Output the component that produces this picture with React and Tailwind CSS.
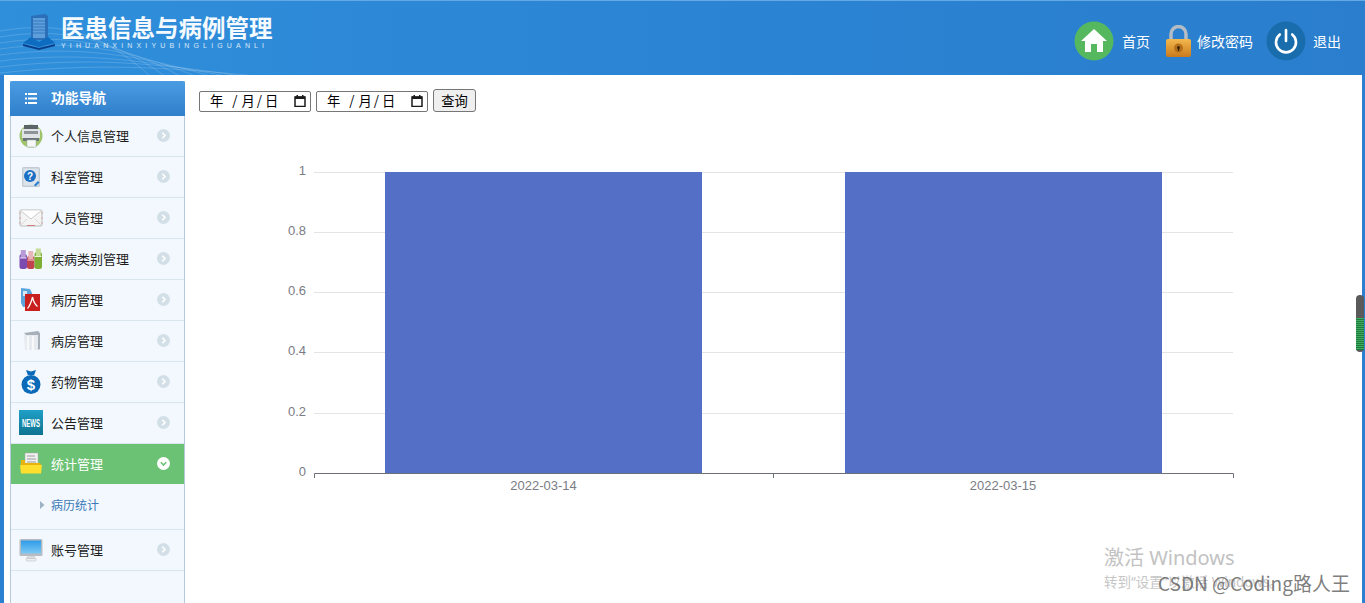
import React from "react";

const cjk = { fontFamily: '"Noto Sans CJK SC", "Noto Sans", sans-serif' };

function Printer() {
  return (
    <svg width="24" height="24" viewBox="0 0 24 24">
      <circle cx="12" cy="12" r="11.500" fill="#9fc46a" />
      <rect x="5" y="1" width="14" height="4" fill="#5c6468" />
      <rect x="3" y="5" width="18" height="9" fill="#dfe3e5" />
      <rect x="5" y="7" width="14" height="3" fill="#8d9599" />
      <rect x="4" y="14" width="16" height="3" fill="#6b7478" />
      <rect x="8" y="16" width="9" height="7" fill="#f7f7f7" stroke="#99aaaa" strokeWidth=".5" />
    </svg>
  );
}
function Help() {
  return (
    <svg width="24" height="24" viewBox="0 0 24 24">
      <rect x="3" y="2" width="18" height="20" rx="1.500" fill="#c3ccd6" />
      <rect x="4.500" y="3.500" width="15" height="17" fill="#dde3ea" />
      <circle cx="11" cy="11" r="6" fill="#1b6fc4" />
      <text x="11" y="14.500" fontSize="10" fontWeight="700" fill="#fff" textAnchor="middle" fontFamily="Liberation Sans">?</text>
      <path d="M15 20l4-4 1.500 1.500-4 4z" fill="#2a7fcf" />
    </svg>
  );
}
function Mail() {
  return (
    <svg width="24" height="24" viewBox="0 0 24 24">
      <rect x="1" y="4" width="22" height="16" rx="1" fill="#f4f4f4" stroke="#bdbdbd" />
      <path d="M1.500 4.500L12 13 22.500 4.500" fill="#fff" stroke="#cacaca" />
      <path d="M2 19l6-6M22 19l-6-6" stroke="#d8d8d8" />
      <path d="M1 6v13M23 6v13" stroke="#d49a9a" strokeWidth=".8" strokeDasharray="2 3" />
      <path d="M8 19.500h8" stroke="#cf8080" />
    </svg>
  );
}
function Tubes() {
  return (
    <svg width="24" height="24" viewBox="0 0 24 24">
      <rect x="0.500" y="7" width="7.500" height="15" rx="2.500" fill="#7c4bb0" />
      <rect x="1.800" y="3" width="5" height="8" fill="#b79bd6" />
      <path d="M1 11h6.500" stroke="#e6dcf2" />
      <rect x="8" y="9" width="7.500" height="13" rx="2.500" fill="#c0434f" />
      <rect x="9.300" y="4" width="5" height="8" fill="#e8b6ba" />
      <path d="M8.500 13h6.500" stroke="#f5dcde" />
      <rect x="15.500" y="5" width="7.500" height="17" rx="2.500" fill="#7fae34" />
      <rect x="16.800" y="1.500" width="5" height="8" fill="#c4dc97" />
      <path d="M16 9.500h6.500" stroke="#eaf4d8" />
    </svg>
  );
}
function Pdf() {
  return (
    <svg width="24" height="24" viewBox="0 0 24 24">
      <path d="M2 0l9 1 2 4v13l-9 1-2-4z" fill="#5ba4dc" />
      <rect x="4" y="3" width="4" height="5" fill="#d3e7f6" />
      <rect x="6" y="6" width="15" height="17" fill="#c91f1f" />
      <path d="M13.500 9c-1 4.500-3 9-5 11.500M13.500 9c1 4.500 3 8 5 9.500" stroke="#fff" strokeWidth="1.200" fill="none" />
    </svg>
  );
}
function Folder() {
  return (
    <svg width="24" height="24" viewBox="0 0 24 24">
      <path d="M5 4l14-2 2 2v16l-2 1V6L7 6z" fill="#a7afb8" />
      <path d="M5 6h14v15H6z" fill="#e7eaee" />
      <path d="M9 7v14M14 7v14" stroke="#f7f8f9" strokeWidth="2" />
    </svg>
  );
}
function Money() {
  return (
    <svg width="24" height="25" viewBox="0 0 24 25">
      <path d="M7 1l5 1.500L17 1l-2 5.500H9z" fill="#0b6ab8" />
      <rect x="8.500" y="6" width="7" height="1.500" fill="#e8f1f9" />
      <circle cx="12" cy="15.500" r="9.500" fill="#0b6ab8" />
      <text x="12" y="21" fontSize="15" fontWeight="700" fill="#fff" textAnchor="middle" fontFamily="Liberation Sans">$</text>
    </svg>
  );
}
function News() {
  return (
    <svg width="24" height="25" viewBox="0 0 24 25">
      <defs>
        <linearGradient id="news" x1="0" y1="0" x2="0" y2="1">
          <stop offset="0" stopColor="#1fa0c8" />
          <stop offset="1" stopColor="#0f7390" />
        </linearGradient>
      </defs>
      <rect width="24" height="25" fill="url(#news)" />
      <text x="12" y="17" fontSize="11" fontWeight="700" fill="#fff" textAnchor="middle" textLength="18" lengthAdjust="spacingAndGlyphs" fontFamily="Liberation Sans">NEWS</text>
    </svg>
  );
}
function OpenFolder() {
  return (
    <svg width="24" height="24" viewBox="0 0 24 24">
      <rect x="6" y="1" width="13" height="14" fill="#f1f1f1" stroke="#a9a9a9" strokeWidth=".5" />
      <path d="M8 4h8M8 7h9M8 10h9" stroke="#9a9a9a" />
      <path d="M2 8h4v3h15l1 2v8H2z" fill="#e8b30e" />
      <path d="M1 13h22l-1 8.500H2z" fill="#ffdf2e" />
    </svg>
  );
}
function Monitor() {
  return (
    <svg width="24" height="24" viewBox="0 0 24 24">
      <defs>
        <linearGradient id="scr" x1="0" y1="0" x2="0" y2="1">
          <stop offset="0" stopColor="#2f9be8" />
          <stop offset="1" stopColor="#7cc9f5" />
        </linearGradient>
      </defs>
      <rect x="0.500" y="1" width="23" height="17" rx="1.500" fill="#b7bcc2" />
      <rect x="2" y="2.500" width="20" height="13" fill="url(#scr)" />
      <path d="M8 18h8l1 3H7z" fill="#d8dbde" />
      <rect x="7" y="20.500" width="10" height="2.500" rx="1" fill="#eceef0" stroke="#b4b8bd" strokeWidth=".5" />
    </svg>
  );
}

function Chevron({ open }) {
  return (
    <svg width="13" height="13" viewBox="0 0 13 13" className="shrink-0">
      <circle cx="6.500" cy="6.500" r="6.500" fill={open ? "#ffffff" : "#d3dfe7"} />
      <path
        d={open ? "M3.800 5.300L6.500 8l2.700-2.700" : "M5.300 3.800L8 6.500 5.300 9.200"}
        fill="none"
        stroke={open ? "#6cc274" : "#ffffff"}
        strokeWidth="1.600"
      />
    </svg>
  );
}

function Row({ icon, label, active }) {
  return (
    <div
      className={
        active
          ? "flex h-[40px] items-center bg-[#6cc274] pb-[1px] pl-[8px] pr-[14px] text-white"
          : "flex h-[41px] items-center border-b border-[#d9e5ef] pb-[1px] pl-[8px] pr-[14px] text-[#1c1c1c]"
      }
    >
      <div className="flex w-[24px] shrink-0 items-center justify-center">{icon}</div>
      <span className="ml-[8px] flex-1 pb-[1px] text-[13px] leading-none">{label}</span>
      <Chevron open={active} />
    </div>
  );
}

function DateBox() {
  return (
    <div className="flex h-[21px] w-[112px] items-center rounded-[2px] border border-[#767676] bg-white pb-[1px] pl-[10px] pr-[4px] text-[13.300px] leading-none text-black">
      <span>年</span>
      <span className="ml-[9px]">/</span>
      <span className="ml-[4px]">月</span>
      <span className="ml-[2px]">/</span>
      <span className="ml-[3px]">日</span>
      <svg width="12" height="12" viewBox="0 0 12 12" className="ml-auto">
        <path d="M1 2h10v9.500H1z" fill="none" stroke="#1a1a1a" strokeWidth="1.500" />
        <rect x="1" y="1.500" width="10" height="2.500" fill="#1a1a1a" />
        <rect x="2.500" y="0" width="1.500" height="2" fill="#1a1a1a" />
        <rect x="8" y="0" width="1.500" height="2" fill="#1a1a1a" />
      </svg>
    </div>
  );
}

function Chart() {
  const grid = [
    [172, "1"],
    [232, "0.8"],
    [292, "0.6"],
    [352, "0.4"],
    [413, "0.2"],
    [473, "0"],
  ];
  return (
    <svg width="1162" height="400" viewBox="199 112 1162 400" className="block" fontFamily="Liberation Sans, sans-serif">
      {grid.slice(0, 5).map(([y]) => (
        <line key={y} x1="314" x2="1233" y1={y + 0.5} y2={y + 0.5} stroke="#e4e4e4" />
      ))}
      {grid.map(([y, t]) => (
        <text key={t} x="306" y={y + 3} textAnchor="end" fontSize="13" fill="#7a7c84">{t}</text>
      ))}
      <rect x="385" y="172" width="317" height="301" fill="#5470c6" />
      <rect x="845" y="172" width="317" height="301" fill="#5470c6" />
      <path d="M314.500 478V473.500H1233.500V478M773.500 473.500V478" fill="none" stroke="#6e7079" />
      <text x="543.500" y="490" textAnchor="middle" fontSize="13" fill="#7a7c84">2022-03-14</text>
      <text x="1003" y="490" textAnchor="middle" fontSize="13" fill="#7a7c84">2022-03-15</text>
    </svg>
  );
}

export default function App() {
  const winFont = { fontFamily: '"Noto Sans", "Noto Sans CJK SC", sans-serif' };
  return (
    <div className="relative flex h-[603px] w-[1365px] flex-col overflow-hidden bg-white" style={cjk}>
      <header className="relative z-10 h-[75px] shrink-0 overflow-hidden border-t border-[#63a9e3] bg-gradient-to-r from-[#2f8fdb] via-[#2b84d4] to-[#2a7ecd]">
        <svg width="300" height="75" viewBox="0 0 300 75" className="absolute left-0 top-0" fill="none" stroke="#ffffff" strokeOpacity=".16">
          <path d="M0 30C60 20 100 30 150 75" />
          <path d="M0 36C60 26 110 36 165 75" />
          <path d="M0 42C65 32 120 42 180 75" />
          <path d="M0 48C70 38 130 48 195 75" />
          <path d="M0 54C75 44 140 54 210 75" />
          <path d="M0 60C80 50 150 60 225 75" />
          <path d="M0 66C85 56 160 62 240 75" />
          <path d="M0 72C90 62 170 66 255 75" />
        </svg>
        <div className="relative flex h-full items-start">
          <div className="ml-[22px] mt-[12px] flex items-start">
            <svg width="34" height="38" viewBox="0 0 34 38" className="shrink-0">
              <path d="M9 3l14-2 3 2v24H9z" fill="#2b6fb8" />
              <path d="M11 5h12v20H11z" fill="#5e9fdb" />
              <path d="M11 8h12M11 11h12M11 14h12M11 17h12M11 20h12" stroke="#2b6fb8" strokeWidth=".8" />
              <path d="M9 24l8 5 9-5 7 6-16 4-16-4z" fill="#0d6cc0" />
              <path d="M1 31l16 4 16-4v2l-16 4-16-4z" fill="#0a3e8a" />
            </svg>
            <div className="ml-[5px] flex flex-col">
              <div className="h-[28px] whitespace-nowrap text-[23.500px] font-bold leading-[28px] text-[#f4fafd]">医患信息与病例管理</div>
              <div className="mt-[1px] whitespace-nowrap text-[7px] leading-[8px] tracking-[4.150px] text-white/80" style={{ fontFamily: '"Liberation Sans", sans-serif' }}>
                YIHUANXINXIYUBINGLIGUANLI
              </div>
            </div>
          </div>
          <nav className="ml-auto mr-[24px] mt-[20px] flex items-center text-[14px] leading-none text-white">
            <svg width="40" height="40" viewBox="0 0 40 40">
              <circle cx="20" cy="20" r="19.500" fill="#55b85f" />
              <path d="M20 8L7 20h4v11h6v-8h6v8h6V20h4z" fill="#fff" />
            </svg>
            <span className="ml-[8px]">首页</span>
            <svg width="27" height="33" viewBox="0 0 27 33" className="ml-[15px]">
              <path d="M6 15V9a7.500 7.500 0 0 1 15 0v6" fill="none" stroke="#b3bcc5" strokeWidth="3.500" />
              <defs>
                <linearGradient id="lock" x1="0" y1="0" x2="0" y2="1">
                  <stop offset="0" stopColor="#f4b84e" />
                  <stop offset="1" stopColor="#c97a1c" />
                </linearGradient>
              </defs>
              <rect x="1" y="14" width="25" height="18" rx="2" fill="url(#lock)" />
              <circle cx="13.500" cy="23" r="4.500" fill="#b5701a" />
              <circle cx="13.500" cy="22.500" r="1.500" fill="#3d2507" />
              <rect x="12.800" y="23" width="1.400" height="3" fill="#3d2507" />
            </svg>
            <span className="ml-[5px]">修改密码</span>
            <svg width="40" height="40" viewBox="0 0 40 40" className="ml-[13px]">
              <circle cx="20" cy="20" r="19.500" fill="#1a6dac" />
              <path d="M13.800 13.500a10 10 0 1 0 12.400 0" fill="none" stroke="#fff" strokeWidth="2.600" strokeLinecap="round" />
              <path d="M20 9v11" stroke="#fff" strokeWidth="2.600" strokeLinecap="round" />
            </svg>
            <span className="ml-[7px]">退出</span>
          </nav>
        </div>
      </header>

      <main className="flex min-h-0 flex-1 border-l-4 border-r-[3px] border-[#2b80d2]">
        <aside className="ml-[6px] mt-[6px] flex w-[175px] shrink-0 flex-col border-x border-[#b4c9dc] bg-[#f2f8fe]">
          <div className="-mx-px flex h-[35px] shrink-0 items-center rounded-t-[2px] bg-gradient-to-b from-[#4a9ce2] to-[#2f7fcb] pb-[1px] pl-[15px] text-white">
            <svg width="12" height="11" viewBox="0 0 12 11" fill="#fff">
              <rect x="0" y="0" width="2" height="2" />
              <rect x="3" y="0" width="9" height="2" />
              <rect x="0" y="4.500" width="2" height="2" />
              <rect x="3" y="4.500" width="9" height="2" />
              <rect x="0" y="9" width="2" height="2" />
              <rect x="3" y="9" width="9" height="2" />
            </svg>
            <span className="ml-[14px] text-[13.750px] font-bold leading-none">功能导航</span>
          </div>
          <Row icon={<Printer />} label="个人信息管理" />
          <Row icon={<Help />} label="科室管理" />
          <Row icon={<Mail />} label="人员管理" />
          <Row icon={<Tubes />} label="疾病类别管理" />
          <Row icon={<Pdf />} label="病历管理" />
          <Row icon={<Folder />} label="病房管理" />
          <Row icon={<Money />} label="药物管理" />
          <Row icon={<News />} label="公告管理" />
          <Row icon={<OpenFolder />} label="统计管理" active />
          <div className="flex h-[46px] items-center border-b border-[#d9e5ef] pb-[4px] pl-[29px]">
            <svg width="5" height="8" viewBox="0 0 5 8">
              <path d="M0 0l4.500 4L0 8z" fill="#9db2c4" />
            </svg>
            <span className="ml-[6px] text-[12px] leading-none text-[#3b78b8]">病历统计</span>
          </div>
          <Row icon={<Monitor />} label="账号管理" />
        </aside>

        <section className="ml-[14px] min-w-0 flex-1 pt-[14px]">
          <div className="flex h-[23px] items-end gap-[5px]">
            <DateBox />
            <DateBox />
            <button className="h-[23px] w-[43px] rounded-[3px] border border-[#767676] bg-[#efefef] text-[13.300px] leading-none text-black">查询</button>
          </div>
          <Chart />
        </section>
      </main>

      <div className="absolute right-[1px] top-[295px] flex h-[57px] w-[8px] flex-col overflow-hidden rounded-[4px] bg-[#5a5a5a]">
        <div className="mt-[23px] h-[32px] w-full bg-[repeating-linear-gradient(to_bottom,#3fae5f_0px,#3fae5f_1px,#1f7a3f_1px,#1f7a3f_2px)]" />
      </div>

      <div className="absolute left-[1104px] top-[545px] whitespace-nowrap text-[20px] leading-[26px] text-[#c2c2c2]" style={winFont}>激活 Windows</div>
      <div className="absolute left-[1104px] top-[573px] whitespace-nowrap text-[13.500px] leading-[18px] text-[#c6c6c6]" style={winFont}>转到“设置”以激活 Windows。</div>
      <div className="absolute left-[1158px] top-[570px] whitespace-nowrap text-[19px] leading-[26px] text-[#5c5c5c]/80">CSDN @Coding路人王</div>
    </div>
  );
}
